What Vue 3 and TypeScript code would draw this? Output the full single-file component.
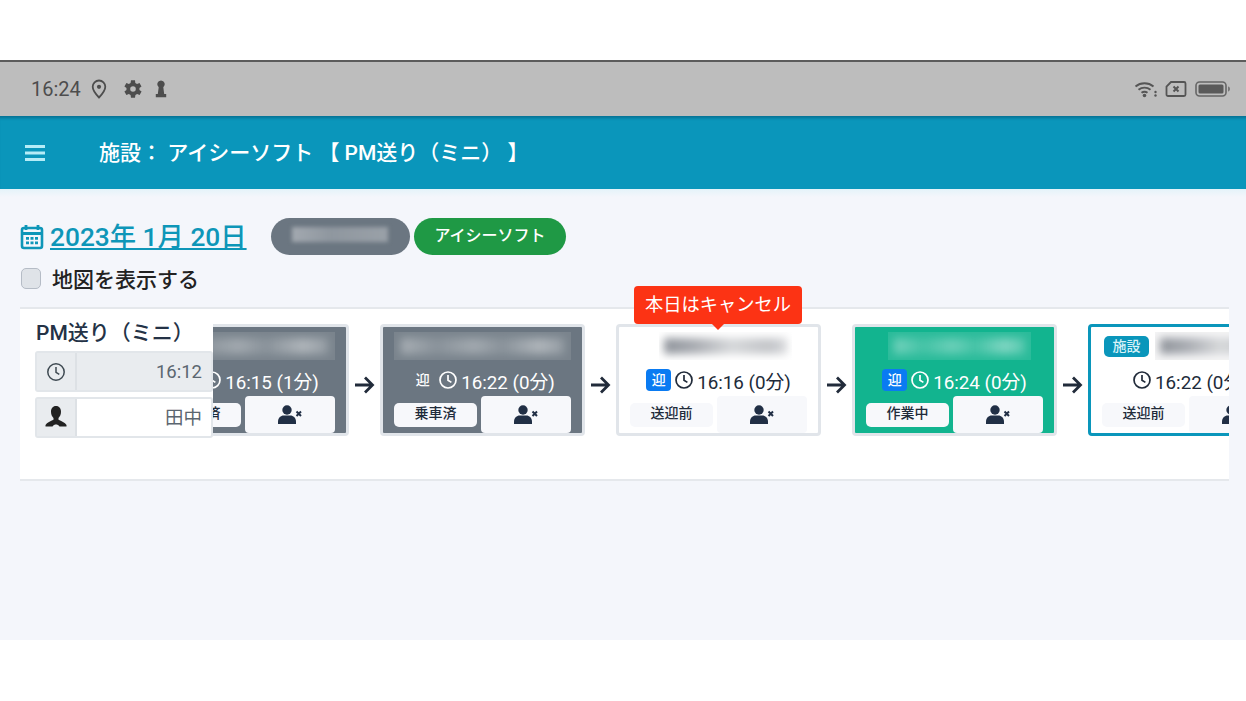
<template>
  <div class="page">
    <div class="screen">
      <div class="status-bar">
        <span class="clock-text">16:24</span>
        <svg class="st-pin" width="16" height="20" viewBox="0 0 16 20"><path d="M8 1.500a6.300 6.300 0 0 0-6.300 6.300C1.700 12 8 18.500 8 18.500S14.300 12 14.300 7.800A6.300 6.300 0 0 0 8 1.500z" fill="none" stroke="#4d4d4d" stroke-width="1.800"/><circle cx="8" cy="7.800" r="2.100" fill="#4d4d4d"/></svg>
        <svg class="st-gear" width="18" height="18" viewBox="4 3 18 18"><path fill="#4d4d4d" d="M19.400 13a7.500 7.500 0 0 0 0-2l2.100-1.600-2-3.500-2.500 1a7.500 7.500 0 0 0-1.700-1L15 3.200h-4l-.4 2.700a7.500 7.500 0 0 0-1.700 1l-2.500-1-2 3.500L6.500 11a7.500 7.500 0 0 0 0 2l-2.100 1.600 2 3.500 2.500-1a7.500 7.500 0 0 0 1.700 1l.4 2.700h4l.4-2.700a7.500 7.500 0 0 0 1.700-1l2.500 1 2-3.500zM13 14.800a2.800 2.800 0 1 1 0-5.600 2.800 2.800 0 0 1 0 5.600z"/></svg>
        <svg class="st-key" width="12" height="18" viewBox="0 0 12 18"><path fill="#4d4d4d" d="M6 .5a3.800 3.800 0 0 0-2.300 6.800L2.800 14H.8v3.300h10.400V14h-2L8.300 7.300A3.800 3.800 0 0 0 6 .5z"/></svg>
        <span class="st-grow"></span>
        <svg width="24" height="18" viewBox="0 0 24 18"><g fill="none" stroke="#555" stroke-width="1.900"><path d="M1.500 6.500a14 14 0 0 1 18 0"/><path d="M4.500 9.800a9.500 9.500 0 0 1 12 0"/><path d="M7.500 12.800a5 5 0 0 1 6 0"/></g><circle cx="10.500" cy="15.500" r="1.800" fill="#555"/><circle cx="21.500" cy="12" r="1.200" fill="#555"/><circle cx="21.500" cy="15.500" r="1.200" fill="#555"/></svg>
        <svg class="st-sim" width="22" height="18" viewBox="0 0 22 18"><path d="M6 2h13a1.500 1.500 0 0 1 1.500 1.500v11A1.500 1.500 0 0 1 19 16H3a1.500 1.500 0 0 1-1.500-1.500V6.500z" fill="none" stroke="#555" stroke-width="1.800"/><path d="M8.500 6.500l5 5m0-5l-5 5" stroke="#555" stroke-width="2"/></svg>
        <svg class="st-bat" width="36" height="18" viewBox="0 0 36 18"><rect x="1" y="2" width="30" height="14" rx="3.500" fill="none" stroke="#666" stroke-width="1.600"/><rect x="3.500" y="4.500" width="25" height="9" rx="1.500" fill="#5a5a5a"/><path d="M33 6.500c1.300.3 2 1.200 2 2.500s-.7 2.200-2 2.500z" fill="#777"/></svg>
      </div>

      <header class="app-bar">
        <svg class="menu" width="20" height="16" viewBox="0 0 20 16"><path d="M0 1.500h20M0 8h20M0 14.500h20" stroke="#b5ecf7" stroke-width="2.800"/></svg>
        <h1 class="app-title">施設： アイシーソフト 【 PM送り（ミニ） 】</h1>
      </header>

      <main class="content">
        <div class="date-row">
          <svg class="cal" width="24" height="28" viewBox="0 0 24 28"><path d="M6 2v5M18 2v5" stroke="#0e96b8" stroke-width="2.800"/><rect x="2" y="5" width="20" height="20" rx="2" fill="none" stroke="#0e96b8" stroke-width="2.600"/><path d="M2 10.500h20" stroke="#0e96b8" stroke-width="3"/><path d="M6 14h3v2.800H6zM10.500 14h3v2.800h-3zM15 14h3v2.800h-3zM6 18.500h3v2.800H6zM10.500 18.500h3v2.800h-3zM15 18.500h3v2.800h-3z" fill="#0e96b8"/></svg>
          <a class="date-link">2023年 1月 20日</a>
          <span class="pill pill-gray"><i class="pill-blur"></i></span>
          <span class="pill pill-green">アイシーソフト</span>
        </div>
        <label class="map-check"><span class="box"></span>地図を表示する</label>

        <section class="route">
          <div class="strip">
            <template v-for="(c, i) in cards" :key="i">
              <svg v-if="i > 0" class="arrow" width="21" height="20" viewBox="0 0 21 20"><path d="M1 10h17M11 2.500l7.500 7.500-7.500 7.500" fill="none" stroke="#212b3a" stroke-width="2.800"/></svg>
              <article class="card" :class="c.kind">
                <div v-if="c.cancel" class="tip">本日はキャンセル</div>
                <div class="name-row">
                  <span v-if="c.kind === 'facility'" class="tag-facility">施設</span>
                  <div class="mosaic" :class="{ narrow: c.cancel }"><i class="smear"></i></div>
                </div>
                <div class="time-row">
                  <span v-if="c.pickup" class="pickup" :class="{ solid: c.pickup === 'solid' }">迎</span>
                  <svg class="clock" width="18" height="18" viewBox="0 0 18 18"><circle cx="9" cy="9" r="8" fill="none" stroke="currentColor" stroke-width="1.700"/><path d="M9 4V9.300l3.400 2.100" fill="none" stroke="currentColor" stroke-width="1.700"/></svg>
                  <span>{{ c.time }}</span>
                </div>
                <div class="actions">
                  <span class="state">{{ c.state }}</span>
                  <span class="absent">
                    <svg width="24" height="20" viewBox="0 0 24 20"><circle cx="9" cy="5" r="4.700" fill="#212f45"/><path d="M0 19v-2.500C0 12.800 3 10.500 5.500 10.500h7c2.500 0 5.500 2.300 5.500 6V19z" fill="#212f45"/><path d="M18.500 6.500l4.500 4.500M23 6.500L18.500 11" stroke="#212f45" stroke-width="2"/></svg>
                  </span>
                </div>
              </article>
            </template>
          </div>

          <aside class="vehicle">
            <div class="vehicle-name">PM送り（ミニ）</div>
            <div class="v-row shaded">
              <span class="v-icon"><svg width="20" height="20" viewBox="0 0 20 20"><circle cx="10" cy="10" r="8.200" fill="none" stroke="#3f4a52" stroke-width="1.500"/><path d="M10 5v5.300l3.300 2" fill="none" stroke="#3f4a52" stroke-width="1.500"/></svg></span>
              <span class="v-val">16:12</span>
            </div>
            <div class="v-row">
              <span class="v-icon"><svg width="24" height="26" viewBox="0 0 24 26"><path fill="#222" d="M12 1c3.300 0 5 2.500 5 5.800 0 2.800-1.100 5-2.500 6.200v1.800c2.800 1.300 6.500 2.800 8 5.200v1.500h-7c-1-1.500-2.200-2-3.500-2s-2.500.5-3.500 2h-7V20c1.500-2.400 5.200-3.900 8-5.200V13C8.100 11.800 7 9.600 7 6.800 7 3.500 8.700 1 12 1z"/></svg></span>
              <span class="v-val">田中</span>
            </div>
          </aside>
        </section>
      </main>
    </div>
  </div>
</template>

<script setup lang="ts">
interface Stop {
  kind: string
  time: string
  state: string
  pickup?: string
  cancel?: boolean
}

const cards: Stop[] = [
  { kind: 'done', time: '16:15 (1分)', state: '乗車済', pickup: 'plain' },
  { kind: 'done', time: '16:22 (0分)', state: '乗車済', pickup: 'plain' },
  { kind: 'wait', time: '16:16 (0分)', state: '送迎前', pickup: 'solid', cancel: true },
  { kind: 'work', time: '16:24 (0分)', state: '作業中', pickup: 'solid' },
  { kind: 'facility', time: '16:22 (0分)', state: '送迎前' },
]
</script>

<style>
html, body { margin: 0; background: #fff; }
</style>

<style scoped>
.page {
  height: 701px;
  padding-top: 60px;
  box-sizing: border-box;
  overflow: hidden;
  font-family: Roboto, "Noto Sans CJK JP", sans-serif;
  color: #212b3a;
}
.screen {
  height: 580px;
  background: #f4f6fb;
  display: flex;
  flex-direction: column;
}
.status-bar {
  height: 56px;
  flex: none;
  box-sizing: border-box;
  border-top: 2px solid #5c5c5c;
  background: #bdbdbd;
  display: flex;
  align-items: center;
  padding: 0 15px 0 31px;
  color: #4d4d4d;
  font-size: 20px;
}
.clock-text { margin-right: 10px; }
.st-gear { margin-left: 17px; }
.st-key { margin-left: 13px; }
.st-grow { flex: 1; }
.st-sim { margin-left: 7px; }
.st-bat { margin-left: 8px; }

.app-bar {
  height: 73px;
  flex: none;
  background: #0a96bb;
  box-shadow: inset 0 4px 3px -2px rgba(0, 60, 90, .4);
  display: flex;
  align-items: center;
  padding-left: 25px;
}
.menu { margin-right: 54px; }
.app-title {
  margin: -3px 0 0;
  font-size: 21px;
  font-weight: 500;
  color: #fff;
  white-space: nowrap;
}

.content {
  flex: 1;
  padding: 29px 17px 0 20px;
  background: linear-gradient(#e4f3f9, #f4f6fb 8px);
}
.date-row {
  height: 37px;
  display: flex;
  align-items: center;
}
.cal { margin-right: 6px; }
.date-link {
  width: 196px;
  margin-right: 25px;
  font-size: 26.3px;
  font-weight: 500;
  line-height: 30px;
  color: #0e96b8;
  text-decoration: underline;
  white-space: nowrap;
}
.pill {
  height: 37px;
  border-radius: 19px;
  display: flex;
  align-items: center;
  justify-content: center;
  color: #fff;
  font-size: 16px;
  font-weight: 500;
}
.pill-gray { width: 139px; background: #6b7681; margin-right: 4px; }
.pill-green { width: 152px; padding-bottom: 5px; box-sizing: border-box; background: #1f9945; }
.pill-blur {
  width: 96px;
  height: 15px;
  margin: -4px 0 0 -2px;
  background: linear-gradient(90deg, #a3a9b0, #8f979f 40%, #9aa1a8);
  filter: blur(2px);
}
.map-check {
  display: flex;
  align-items: center;
  margin-top: 7px;
  height: 32px;
  font-size: 21px;
  font-weight: 500;
  color: #222;
}
.box {
  box-sizing: border-box;
  width: 20px;
  height: 21px;
  margin: 1px 11px 0 1px;
  background: #dfe3e8;
  border: 1px solid #b5bcc6;
  border-radius: 5px;
}

.route {
  position: relative;
  margin-top: 13px;
  height: 174px;
  box-sizing: border-box;
  background: #fff;
  border-top: 2px solid #e5e8ec;
  border-bottom: 2px solid #e5e8ec;
  clip-path: inset(-40px 0 0 0);
}
.strip {
  display: flex;
  align-items: flex-start;
  padding: 15px 0 0 124px;
  width: max-content;
}
.arrow { margin: 51px 5px 0 5px; }
.card {
  position: relative;
  box-sizing: border-box;
  width: 205px;
  height: 112px;
  padding: 4px 11px 0;
  border: 3px solid #e1e5ea;
  border-radius: 4px;
  background: #fff;
  color: #212b3a;
  display: flex;
  flex-direction: column;
}
.card.done { background: #6b7681; color: #fff; }
.card.work { background: #12b48f; color: #fff; }
.card.facility { border-color: #0a96bb; }

.name-row {
  height: 30px;
  display: flex;
  align-items: center;
  justify-content: center;
  gap: 6px;
}
.mosaic {
  width: 178px;
  height: 28px;
  overflow: hidden;
  background: rgba(255, 255, 255, .1);
  display: flex;
  align-items: center;
  justify-content: center;
}
.work .mosaic { width: 143px; margin-left: 10px; }
.mosaic.narrow { width: 133px; margin-left: 14px; background: #fff; }
.smear {
  width: 92%;
  height: 16px;
  background: linear-gradient(90deg, rgba(255,255,255,.35), rgba(255,255,255,.12) 22%, rgba(255,255,255,.3) 45%, rgba(255,255,255,.12) 62%, rgba(255,255,255,.4) 85%, rgba(255,255,255,.2));
  filter: blur(4px);
}
.wait .smear, .facility .smear {
  background: linear-gradient(90deg, #8e939a, #a8abb1 25%, #d6d8da 55%, #c2c4c8 85%, #d8d9dc);
}
.facility .mosaic { width: 120px; flex: none; margin-right: -62px; background: #f5f5f6; }
.tag-facility {
  flex: none;
  width: 45px;
  height: 21px;
  margin-left: 2px;
  border-radius: 5px;
  background: #0a96bb;
  color: #d8f2f8;
  font-size: 14px;
  font-weight: 500;
  line-height: 21px;
  text-align: center;
}
.facility .name-row { justify-content: flex-start; }

.time-row {
  margin-top: 7px;
  height: 24px;
  display: flex;
  align-items: center;
  justify-content: center;
  gap: 4px;
  font-size: 18.8px;
  white-space: nowrap;
}
.facility .time-row { justify-content: flex-start; padding-left: 31px; }
.pickup {
  width: 25px;
  height: 22px;
  border-radius: 4px;
  font-size: 14px;
  font-weight: 500;
  line-height: 22px;
  text-align: center;
}
.pickup.solid { background: #0a7bf2; color: #fff; }

.actions {
  margin-top: 4px;
  display: flex;
  align-items: center;
  gap: 4px;
}
.state {
  flex: none;
  width: 83px;
  height: 24px;
  border-radius: 5px;
  background: #f7f8fb;
  color: #212b3a;
  font-size: 14px;
  font-weight: 500;
  line-height: 21px;
  text-align: center;
}
.absent {
  flex: none;
  width: 90px;
  height: 37px;
  border-radius: 4px;
  background: #f7f8fb;
  display: flex;
  align-items: center;
  justify-content: center;
}
.tip {
  position: absolute;
  left: 15px;
  top: -41px;
  width: 168px;
  height: 38px;
  border-radius: 4px;
  background: #fc3314;
  color: #fff;
  font-size: 18.3px;
  line-height: 37px;
  text-align: center;
  z-index: 1;
}
.tip::after {
  content: "";
  position: absolute;
  left: 78px;
  bottom: -6px;
  border: 6px solid transparent;
  border-bottom: 0;
  border-top-color: #fc3314;
}

.vehicle {
  position: absolute;
  left: 15px;
  top: 8px;
  width: 178px;
  background: #fff;
  box-shadow: -15px -8px 0 #fff;
}
.vehicle-name {
  height: 34px;
  padding-left: 1px;
  font-size: 21px;
  font-weight: 500;
  line-height: 32px;
  color: #243246;
  white-space: nowrap;
}
.v-row {
  height: 41px;
  box-sizing: border-box;
  display: flex;
  margin-top: 5px;
  border: 2px solid #e2e6ea;
  border-radius: 3px;
  background: #fff;
}
.vehicle-name + .v-row { margin-top: 0; }
.v-row.shaded { background: #e9ecef; }
.v-icon {
  width: 40px;
  flex: none;
  box-sizing: border-box;
  background: #e9ecef;
  border-right: 2px solid #dde1e5;
  display: flex;
  align-items: center;
  justify-content: center;
}
.v-val {
  flex: 1;
  padding-right: 9px;
  text-align: right;
  font-size: 18.5px;
  line-height: 39px;
  color: #5b6670;
}
</style>
